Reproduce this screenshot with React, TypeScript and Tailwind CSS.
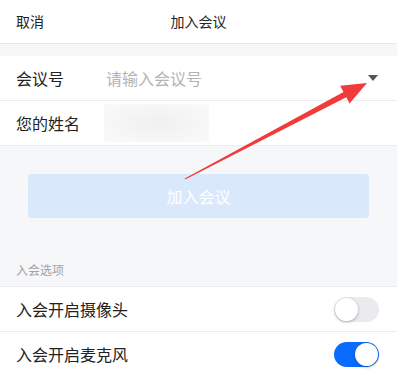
import React from 'react'

const font = { fontFamily: '"Noto Sans CJK SC", "Noto Sans", sans-serif' }

function Toggle({ on }: { on: boolean }) {
  return (
    <div
      className={`relative w-[45px] h-[25px] rounded-full ${on ? 'bg-[#0a6cff]' : 'bg-[#ebebef]'}`}
    >
      <div
        className={`absolute top-[1px] w-[23px] h-[23px] rounded-full bg-white shadow-[0_1px_3px_rgba(0,0,0,0.3)] ${on ? 'right-[1px]' : 'left-[1px]'}`}
      />
    </div>
  )
}

export default function App() {
  return (
    <div className="relative w-[397px] h-[372px] overflow-hidden bg-[#f6f7f9] text-[#222]" style={font}>
      {/* header */}
      <div className="relative flex items-center h-[44px] bg-white px-4 border-b border-[#e8e8ec]">
        <span className="text-[14px]">取消</span>
        <span className="absolute left-0 right-0 text-center text-[14px] pointer-events-none">加入会议</span>
      </div>

      <div className="h-[12px]" />

      <div className="bg-white">
        <div className="flex items-center h-[45px] px-4 border-b border-[#ececef]">
          <span className="w-[90px] text-[16px]">会议号</span>
          <span className="flex-1 text-[16px] text-[#b3b3b3]">请输入会议号</span>
          <span className="w-0 h-0 border-l-[5px] border-r-[5px] border-t-[6px] border-l-transparent border-r-transparent border-t-[#555] mr-[3px]" />
        </div>
        <div className="flex items-center h-[45px] px-4 border-b border-[#ececef]">
          <span className="w-[88px] text-[16px]">您的姓名</span>
          <div className="w-[105px] h-[38px] bg-[radial-gradient(ellipse_at_center,#f0f0f0,#fafafa)]" />
        </div>
      </div>

      <div className="px-[28px] pt-[28px]">
        <div className="h-[44px] rounded-[3px] bg-[#d9e9fb] flex items-center justify-center text-white text-[16px]">
          加入会议
        </div>
      </div>

      <div className="px-4 pt-[43px] pb-[8px] text-[12px] leading-[17px] text-[#a3a3a3]">入会选项</div>

      <div className="bg-white border-t border-[#ececef]">
        <div className="flex items-center justify-between h-[45px] pl-4 pr-[18px] border-b border-[#ececef]">
          <span className="text-[16px]">入会开启摄像头</span>
          <Toggle on={false} />
        </div>
        <div className="flex items-center justify-between h-[44px] pl-4 pr-[18px]">
          <span className="text-[16px]">入会开启麦克风</span>
          <Toggle on={true} />
        </div>
      </div>

      {/* annotation arrow */}
      <svg className="absolute inset-0 pointer-events-none" width="397" height="372" viewBox="0 0 397 372">
        <polygon
          points="184.8,178.6 343.5,92 340.2,85.8 367,83 349.6,103.5 346.3,97.3 185.2,179.4"
          fill="#f23a3a"
        />
      </svg>
    </div>
  )
}
